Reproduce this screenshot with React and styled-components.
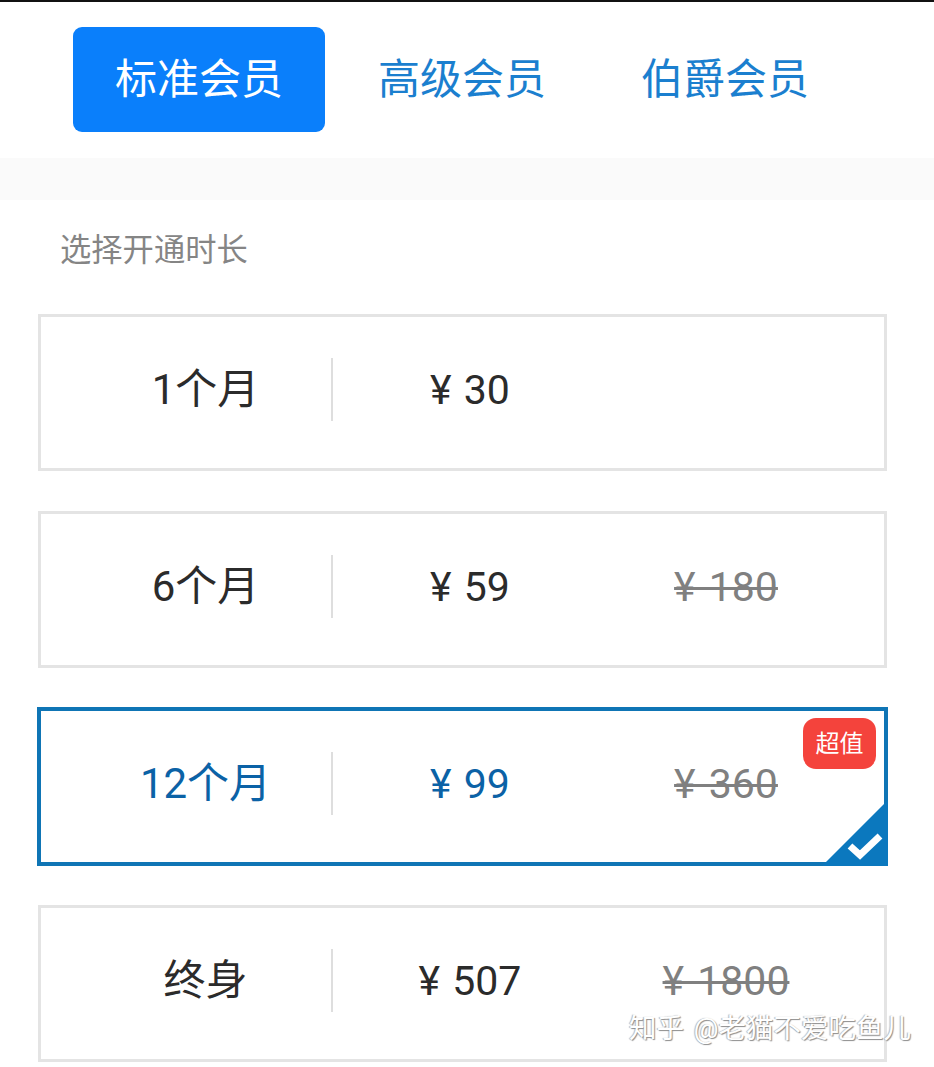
import React from 'react'
import styled, { createGlobalStyle } from 'styled-components'

const Global = createGlobalStyle`
html, body {
  margin: 0;
  padding: 0;
  background: #fff;
}
body {
  font-family: Roboto, "Noto Sans CJK SC", sans-serif;
}
`

const Page = styled.div`
position: relative;
width: 934px;
height: 1067px;
overflow: hidden;
border-top: 2px solid #111;
box-sizing: border-box;
`

// --tabs --
const Tabs = styled.div`
display: flex;
gap: 11px;
padding: 25px 0 26px 73px;
`
const Tab = styled.div`
width: 252px;
height: 105px;
display: flex;
align-items: center;
justify-content: center;
border-radius: 9px;
font-size: 42px;
line-height: 48px;
background: ${p => (p.$active ? '#0a7ffb' : 'transparent')};
color: ${p => (p.$active ? '#fff' : '#1b7fcf')};
`
const Band = styled.div`
height: 42px;
background: #fafafa;
`

// --plans --
const Label = styled.div`
padding: 31px 0 0 60px;
height: 114px;
box-sizing: border-box;
font-size: 31.3px;
line-height: 40px;
color: #858585;
`
const Plans = styled.div`
display: flex;
flex-direction: column;
gap: 40px;
margin: 0 47px 0 38px;
`
const Plan = styled.div`
position: relative;
height: ${p => (p.$selected ? '159px' : '157px')};
margin: ${p => (p.$selected ? '-1px' : '0')};
box-sizing: border-box;
display: grid;
grid-template-columns: 256px 276px 236px;
align-items: center;
padding: 0 0 6px 36px;
border: solid ${p => (p.$selected ? '#0f75b5' : '#e4e4e4')};
border-width: ${p => (p.$selected ? '4px' : '3px')};
color: ${p => (p.$selected ? '#0b62a6' : '#2b2b2b')};
font-size: 41px;
line-height: 48px;
word-spacing: 2px;
`
const Term = styled.div`
height: 63px;
display: flex;
align-items: center;
justify-content: center;
padding-left: 3px;
border-right: 2px solid #dedede;
font-size: 42px;
`
const Price = styled.div`
padding-right: 2px;
text-align: center;
`
const OldPrice = styled.div`
padding-right: 2px;
text-align: center;
color: #808080;
word-spacing: 3px;
text-decoration: line-through;
text-decoration-thickness: 3px;
`
const Badge = styled.div`
position: absolute;
top: 7px;
right: 8px;
width: 73px;
height: 51px;
display: flex;
align-items: center;
justify-content: center;
border-radius: 13px;
background: #f4433c;
color: #fff;
font-size: 24px;
`
const Corner = styled.svg`
position: absolute;
right: -4px;
bottom: -4px;
width: 66px;
height: 66px;
`
const Watermark = styled.div`
position: absolute;
left: 629px;
top: 1009px;
font-size: 27.5px;
line-height: 36px;
word-spacing: 3px;
color: #fff;
white-space: nowrap;
text-shadow: 1px 1px 1px #8c8c8c, -1px 0 1px #b4b4b4;
`

const plans = [
  { term: '1个月', price: '¥ 30' },
  { term: '6个月', price: '¥ 59', old: '¥ 180' },
  { term: '12个月', price: '¥ 99', old: '¥ 360', selected: true },
  { term: '终身', price: '¥ 507', old: '¥ 1800' },
]

const App = () => {
  return (
    <Page>
      <Global />
      <Tabs>
        <Tab $active>标准会员</Tab>
        <Tab>高级会员</Tab>
        <Tab>伯爵会员</Tab>
      </Tabs>
      <Band />
      <Label>选择开通时长</Label>
      <Plans>
        {plans.map(p => (
          <Plan key={p.term} $selected={p.selected}>
            <Term>{p.term}</Term>
            <Price>{p.price}</Price>
            {p.old && <OldPrice>{p.old}</OldPrice>}
            {p.selected && <Badge>超值</Badge>}
            {p.selected && (
              <Corner viewBox="0 0 66 66">
                <path d="M66 0V66H0Z" fill="#0b78be" />
                <path d="M28 46L38 55L58 36" fill="none" stroke="#fff" strokeWidth="7" />
              </Corner>
            )}
          </Plan>
        ))}
      </Plans>
      <Watermark>知乎 @老猫不爱吃鱼儿</Watermark>
    </Page>
  )
}

export default App
